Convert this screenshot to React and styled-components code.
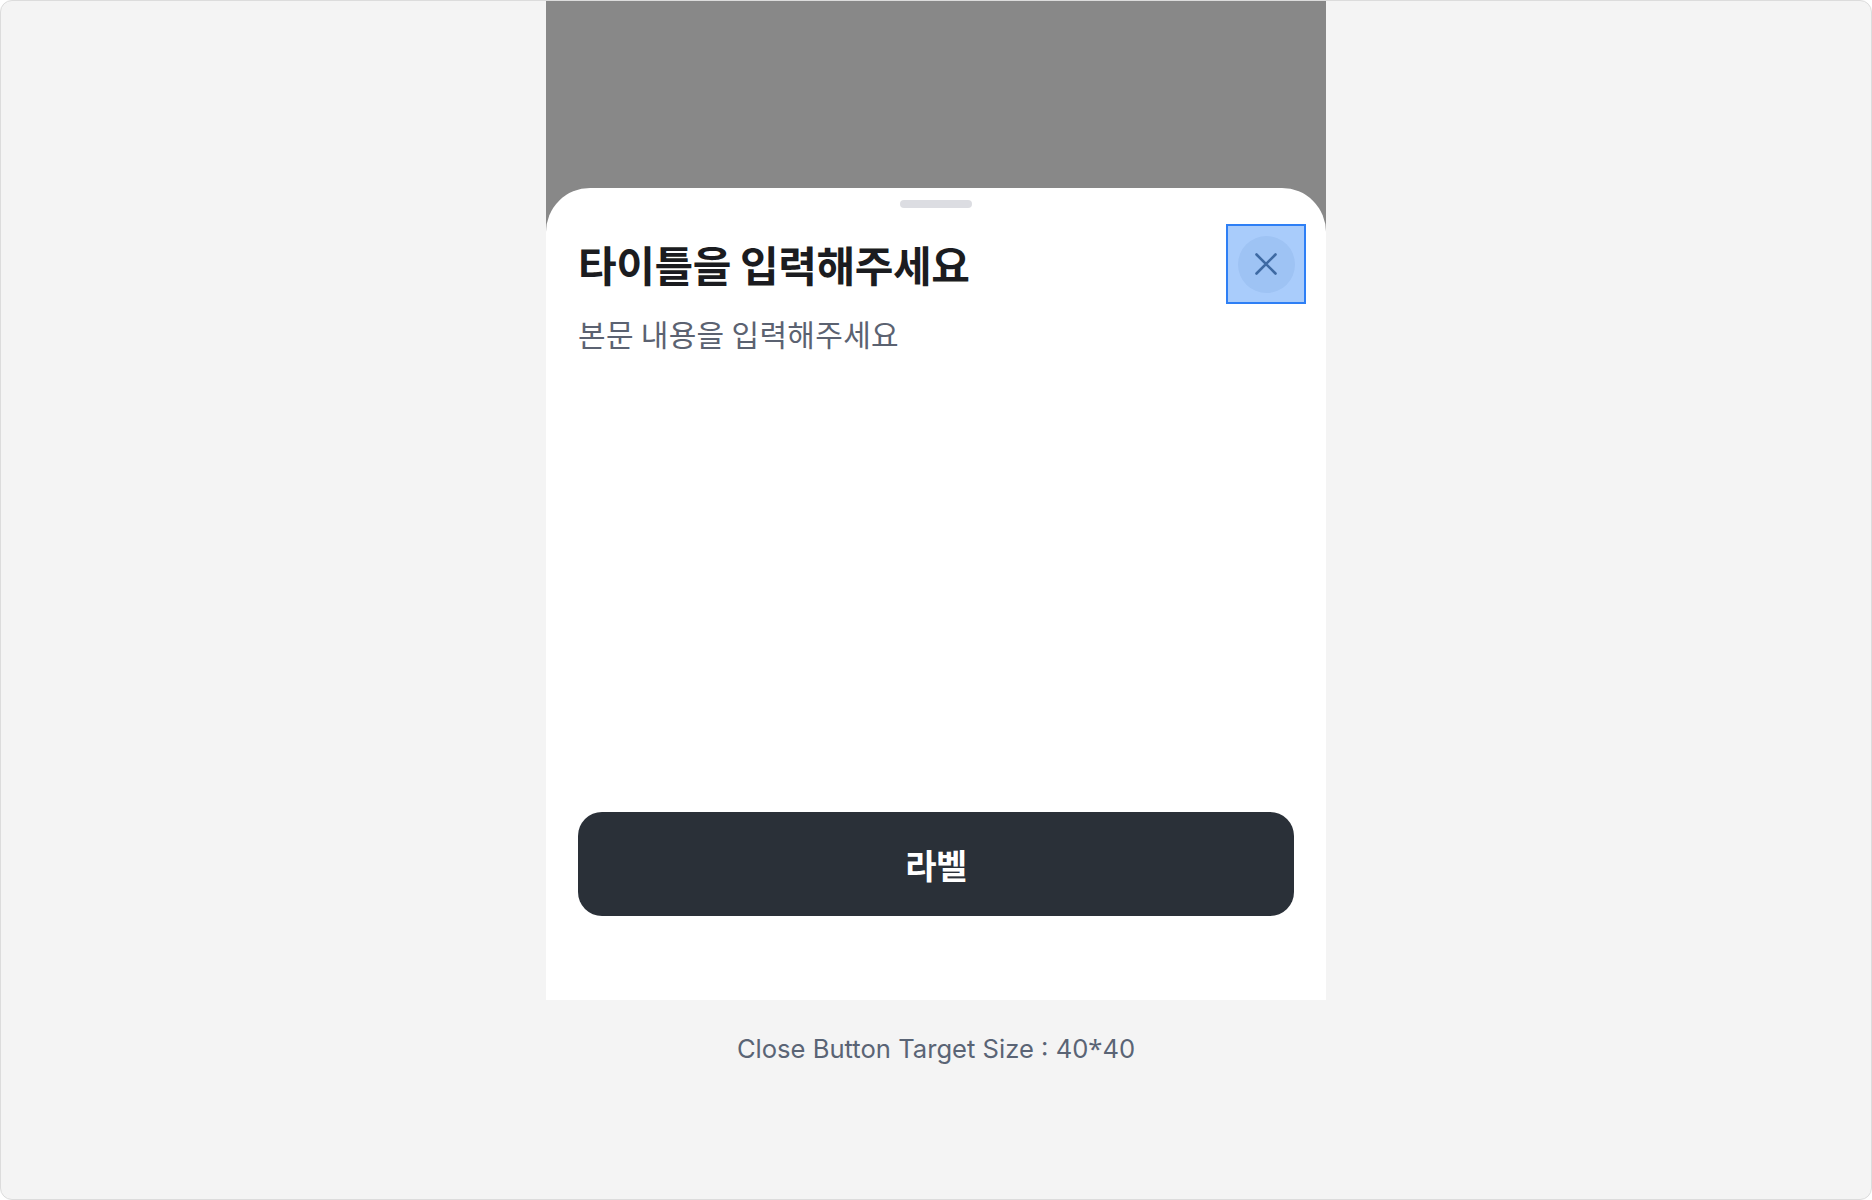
import React from "react";
import styled, { createGlobalStyle } from "styled-components";

const GlobalStyle = createGlobalStyle`
  *, *::before, *::after { box-sizing: border-box; }
  html, body { margin: 0; padding: 0; background: #ffffff; }
  body {
    font-family: Inter, "Noto Sans CJK KR", "Noto Sans", sans-serif;
    -webkit-font-smoothing: antialiased;
  }
`;

const Canvas = styled.div`
  width: 1872px;
  height: 1200px;
  border: 1px solid #dcdcdc;
  border-radius: 12px;
  background: #f4f4f4;
  display: flex;
  flex-direction: column;
  align-items: center;
  overflow: hidden;
`;

const Device = styled.div`
  width: 780px;
  height: 1000px;
  margin-top: -1px;
  background: #888888;
  display: flex;
  flex-direction: column;
  padding-top: 188px;
`;

const Sheet = styled.section`
  flex: 1;
  background: #ffffff;
  border-radius: 44px 44px 0 0;
  display: flex;
  flex-direction: column;
  padding: 12px 0 84px;
`;

const Handle = styled.div`
  width: 72px;
  height: 8px;
  border-radius: 4px;
  background: #dcdde2;
  align-self: center;
`;

const Header = styled.header`
  display: flex;
  align-items: center;
  justify-content: space-between;
  margin-top: 16px;
  padding: 0 20px 0 32px;
  height: 80px;
`;

const Title = styled.h2`
  margin: 0;
  font-family: "Noto Sans CJK KR", sans-serif;
  font-size: 42px;
  font-weight: 700;
  line-height: 54px;
  letter-spacing: -0.4px;
  color: #1b1c20;
`;

const CloseButton = styled.button`
  position: relative;
  width: 80px;
  height: 80px;
  padding: 0;
  border: none;
  background: transparent;
  display: flex;
  align-items: center;
  justify-content: center;
  cursor: pointer;

  /* target-size highlight laid over the button */
  &::after {
    content: "";
    position: absolute;
    inset: 0;
    border: 2px solid #2e7ff5;
    background: rgba(30, 120, 245, 0.38);
  }
`;

const CloseCircle = styled.span`
  width: 57px;
  height: 57px;
  border-radius: 50%;
  background: #eef0f4;
  display: flex;
  align-items: center;
  justify-content: center;
  color: #536171;
`;

const Body = styled.p`
  margin: 8px 0 0;
  padding: 0 32px;
  font-family: "Noto Sans CJK KR", sans-serif;
  font-size: 30px;
  font-weight: 400;
  line-height: 42px;
  letter-spacing: 0.3px;
  color: #5b6271;
`;

const Spacer = styled.div`
  flex: 1;
`;

const PrimaryButton = styled.button`
  margin: 0 32px;
  height: 104px;
  border: none;
  border-radius: 24px;
  background: #2a3038;
  color: #ffffff;
  font-family: "Noto Sans CJK KR", sans-serif;
  font-size: 34px;
  font-weight: 700;
  letter-spacing: -0.5px;
  cursor: pointer;
`;

const Caption = styled.p`
  margin: 33px 0 0;
  font-family: Inter, "Noto Sans", sans-serif;
  font-size: 25.6px;
  line-height: 32px;
  color: #5a6475;
`;

/* raised asterisk, as in "40*40" */
const Star = styled.span`
  font-family: "Noto Sans", sans-serif;
`;

const CloseIcon = () => (
  <svg width="22" height="22" viewBox="0 0 22 22" fill="none">
    <path
      d="M1.5 1.5 L20.5 20.5 M20.5 1.5 L1.5 20.5"
      stroke="currentColor"
      strokeWidth="2.6"
      strokeLinecap="round"
    />
  </svg>
);

export default function App() {
  return (
    <>
      <GlobalStyle />
      <Canvas>
        <Device>
          <Sheet>
            <Handle />
            <Header>
              <Title>타이틀을 입력해주세요</Title>
              <CloseButton aria-label="닫기">
                <CloseCircle>
                  <CloseIcon />
                </CloseCircle>
              </CloseButton>
            </Header>
            <Body>본문 내용을 입력해주세요</Body>
            <Spacer />
            <PrimaryButton>라벨</PrimaryButton>
          </Sheet>
        </Device>
        <Caption>
          Close Button Target Size : 40<Star>*</Star>40
        </Caption>
      </Canvas>
    </>
  );
}
